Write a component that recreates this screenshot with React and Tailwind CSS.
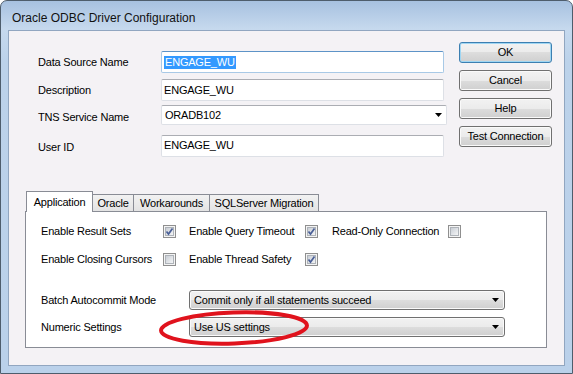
const btnBg =
  'bg-[linear-gradient(to_bottom,#f2f2f2_0%,#ebebeb_50%,#dddddd_50%,#cfcfcf_100%)]'

function Button({ children, isDefault }) {
  return (
    <div
      className={`flex h-[21px] w-[93px] items-center justify-center rounded-[3px] border ${btnBg} ${
        isDefault
          ? 'border-[#3c7fb1] shadow-[inset_0_0_0_1px_#9fd6f3]'
          : 'border-[#707070] shadow-[inset_0_0_0_1px_#fafafa]'
      }`}
    >
      {children}
    </div>
  )
}

function TextBox({ children, focused, w = 'w-[283px]' }) {
  return (
    <div
      className={`flex h-[22px] ${w} items-center rounded-[2px] border bg-white pl-[2px] ${
        focused
          ? 'border-[#a8c9e6] border-t-[#5d93c7]'
          : 'border-[#dde0e6] border-t-[#abadb3]'
      }`}
    >
      {children}
    </div>
  )
}

function Arrow() {
  return (
    <svg width="7" height="4" viewBox="0 0 7 4">
      <path d="M0 0 H7 L3.5 4 Z" fill="#000" />
    </svg>
  )
}

function Check({ checked }) {
  return (
    <div className="relative h-[13px] w-[13px] border border-[#8f8f8f] bg-[#f4f4f4] p-px">
      <div className="h-full w-full border border-[#aeb3b9] bg-gradient-to-br from-[#c9ced5] to-[#f4f5f6]" />
      {checked && (
        <svg className="absolute left-0 top-0" width="11" height="11" viewBox="0 0 11 11">
          <path d="M2.5 5.5 L4.5 8 L8.5 2.5" fill="none" stroke="#4a5f97" strokeWidth="1.7" />
        </svg>
      )}
    </div>
  )
}

function Select({ children }) {
  return (
    <div
      className={`flex h-[20px] w-[316px] items-center justify-between rounded-[3px] border border-[#707070] pl-[4px] pr-[5px] ${btnBg} shadow-[inset_0_0_0_1px_#fafafa]`}
    >
      <span>{children}</span>
      <Arrow />
    </div>
  )
}

function FormRow({ label, children, labelPad = '', mt }) {
  return (
    <div className={`flex items-center ${mt}`}>
      <div className={`w-[123px] ${labelPad}`}>{label}</div>
      {children}
    </div>
  )
}

export default function App() {
  return (
    <div className="h-[374px] w-[573px] font-['Liberation_Sans',Arial,sans-serif] text-[11px] tracking-[-0.2px] text-black">
      <div className="flex h-full flex-col rounded-t-[7px] border border-[#4e5d6c] bg-[linear-gradient(to_bottom,#a7c1e0_0px,#c6d9ee_28px,#bcd2ea_60px,#bad1ea_100%)]">
        <div className="flex h-[29px] items-center pl-[11px] pt-[5px] text-[12px] tracking-normal text-[#111]">
          Oracle ODBC Driver Configuration
        </div>
        <div className="mx-[7px] mb-[7px] flex-1 border border-[#91a6c0] bg-[#f4f2f5]">
          <div className="flex h-[160px]">
            <div className="pl-[29px] pt-[20px]">
              <FormRow label="Data Source Name">
                <TextBox focused>
                  <span className="bg-[#3399ff] px-px leading-[13px] text-white">ENGAGE_WU</span>
                </TextBox>
              </FormRow>
              <FormRow label="Description" mt="mt-[6px]">
                <TextBox>ENGAGE_WU</TextBox>
              </FormRow>
              <FormRow label="TNS Service Name" labelPad="pt-[4px]" mt="mt-[4px]">
                <div className="flex h-[20px] w-[286px] items-center justify-between rounded-[2px] border border-[#dde0e6] border-t-[#abadb3] bg-white pl-[3px] pr-[4px]">
                  <span>ORADB102</span>
                  <Arrow />
                </div>
              </FormRow>
              <FormRow label="User ID" labelPad="pt-[3px]" mt="mt-[9px]">
                <TextBox>ENGAGE_WU</TextBox>
              </FormRow>
            </div>
            <div className="ml-[12px] flex flex-col gap-[7px] pt-[11px]">
              <Button isDefault>OK</Button>
              <Button>Cancel</Button>
              <Button>Help</Button>
              <Button>Test Connection</Button>
            </div>
          </div>

          <div className="ml-[16px] w-[522px]">
            <div className="flex h-[20px] items-end pl-px">
              <div className="relative z-10 -mb-px flex h-[21px] w-[67px] items-start justify-center border border-b-0 border-[#898c95] bg-white pt-[2px]">
                Application
              </div>
              <div className="-ml-px flex h-[17px] w-[42px] items-center justify-center border border-b-0 border-[#898c95] bg-gradient-to-b from-[#f2f2f2] to-[#e3e3e3]">
                Oracle
              </div>
              <div className="-ml-px flex h-[17px] w-[77px] items-center justify-center border border-b-0 border-[#898c95] bg-gradient-to-b from-[#f2f2f2] to-[#e3e3e3]">
                Workarounds
              </div>
              <div className="-ml-px flex h-[17px] w-[110px] items-center justify-center border border-b-0 border-[#898c95] bg-gradient-to-b from-[#f2f2f2] to-[#e3e3e3]">
                SQLServer Migration
              </div>
            </div>
            <div className="relative h-[137px] border border-[#898c95] bg-white pl-[15px]">
              <div className="mt-[10px] flex h-[18px] items-center">
                <div className="w-[122px]">Enable Result Sets</div>
                <div className="w-[26px]"><Check checked /></div>
                <div className="w-[116px]">Enable Query Timeout</div>
                <div className="w-[27px]"><Check checked /></div>
                <div className="w-[116px]">Read-Only Connection</div>
                <Check />
              </div>
              <div className="mt-[10px] flex h-[18px] items-center">
                <div className="w-[122px]">Enable Closing Cursors</div>
                <div className="w-[26px]"><Check /></div>
                <div className="w-[116px]">Enable Thread Safety</div>
                <Check checked />
              </div>
              <div className="mt-[22px] flex items-center">
                <div className="w-[148px]">Batch Autocommit Mode</div>
                <Select>Commit only if all statements succeed</Select>
              </div>
              <div className="mt-[7px] flex items-center">
                <div className="w-[148px]">Numeric Settings</div>
                <Select>Use US settings</Select>
              </div>
              <svg
                className="pointer-events-none absolute left-[130px] top-[97px]"
                width="156"
                height="38"
                viewBox="0 0 156 38"
              >
                <ellipse
                  cx="78"
                  cy="19"
                  rx="73"
                  ry="15.5"
                  transform="rotate(-2 78 19)"
                  fill="none"
                  stroke="#e0131d"
                  strokeWidth="4"
                />
              </svg>
            </div>
          </div>
        </div>
      </div>
    </div>
  )
}
